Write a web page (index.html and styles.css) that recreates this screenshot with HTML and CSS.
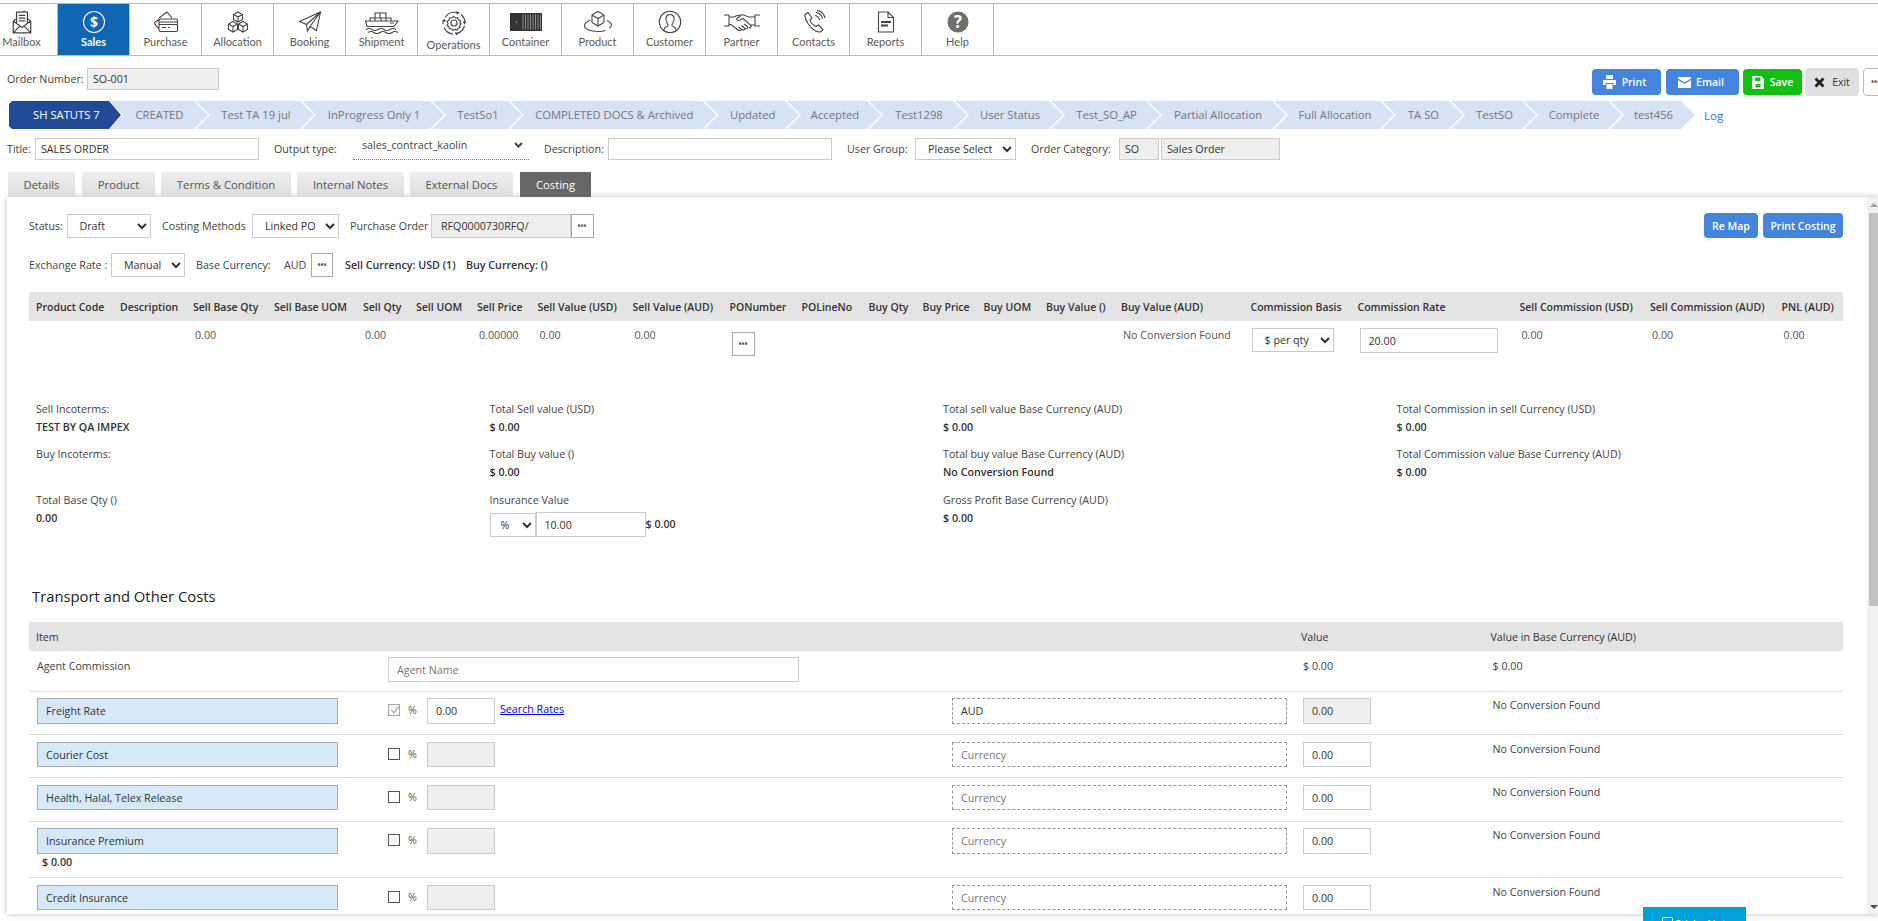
FILE: index.html
```html
<!DOCTYPE html>
<html lang="en">
<head>
<meta charset="utf-8">
<title>Sales Order</title>
<link rel="stylesheet" href="styles.css">
</head>
<body>
<div class="page">
  <nav class="nav">
    <a class="nav-item"><svg class="ico" width="24" height="24" viewBox="2.500 1 19 22"><path d="M4 11V22H20V11M4 11L7.500 8.500M20 11L16.500 8.500M4 11L12 17L20 11M4 22L10 15.800M20 22L14 15.800M7 13V3H13L14 2L15 3H17V13M9 6H15M9 8.500H15M9 11H15"/></svg><span>Mailbox</span></a>
    <a class="nav-item nav-active"><svg class="ico" width="24" height="24" viewBox="0 0 24 24"><circle cx="12" cy="12" r="10.500"/><text x="12" y="17" class="ico-text">$</text></svg><span>Sales</span></a>
    <a class="nav-item"><svg class="ico" width="26" height="24" viewBox="0 0 26 24"><path d="M6 8L14 2L19 8M6 19L2 14.500C1.500 14 1.500 13 2 12.500L6 9M7.500 9H23C24 9 24.500 9.500 24.500 10.500V20C24.500 21 24 21.500 23 21.500H7.500C6.500 21.500 6 21 6 20V10.500C6 9.500 6.500 9 7.500 9ZM6 12H24.500M6 14.500H24.500M9 17.500H13M15 17.500H17"/></svg><span>Purchase</span></a>
    <a class="nav-item"><svg class="ico" width="24" height="24" viewBox="0 0 24 24"><path d="M12 2L16.500 4.500V9.500L12 12L7.500 9.500V4.500ZM7.500 4.500L12 7L16.500 4.500M12 7V12M7 11.500L11.500 14V19.500L7 22L2.500 19.500V14ZM2.500 14L7 16.500L11.500 14M7 16.500V22M17 11.500L21.500 14V19.500L17 22L12.500 19.500V14ZM12.500 14L17 16.500L21.500 14M17 16.500V22"/></svg><span>Allocation</span></a>
    <a class="nav-item"><svg class="ico" width="24" height="24" viewBox="0 0 24 24"><path d="M1.500 11.500L22.500 2L18.500 20.500L12 16.500L9.500 21L8.500 14.500ZM22.500 2L8.500 14.500M22.500 2L12 16.500M9.500 21L12 16.500"/></svg><span>Booking</span></a>
    <a class="nav-item"><svg class="ico" width="36" height="24" viewBox="0 0 36 24"><path d="M3 16.500L1.500 11H6V8H11V3H16V3H22V8H27V11H34L30 16.500M6 11H27M11 8H22M16 3V8M11 8V11M17 8V11M22 8V11M3 16.500H30M2 19.500Q5 17.500 8 19.500T14 19.500T20 19.500T26 19.500T32 19.500M4 22.500Q7 20.500 10 22.500T16 22.500T22 22.500T28 22.500T34 22.500M26 13H30"/></svg><span>Shipment</span></a>
    <a class="nav-item nav-tall"><svg class="ico" width="26" height="26" viewBox="0 0 26 26"><circle cx="13" cy="13" r="3"/><path d="M13 6.500L14.500 8.200L16.700 7.700L17.300 9.800L19.400 10.500L18.800 12.700L20 13.800L18.600 15.500L19 17.500L16.900 18.100L16 20L13.800 19.400L12 20.300L10.500 18.700L8.300 18.800L7.800 16.700L6 15.500L7 13.500L6 11.500L8 10.200L8.300 8L10.500 8Z"/><path d="M4 7.500A11 11 0 0 1 16 2.500M20 4.500A11 11 0 0 1 24 13M23.500 16A11 11 0 0 1 16 23.500M12 24A11 11 0 0 1 3 17.500M2 14A11 11 0 0 1 2.500 10"/><path class="ico-fill" d="M15.500 1L19 3L15.500 4.500ZM25 11L23.800 15L21.800 11.800ZM15 25.500L14 22L18 23ZM1 11L4 8.500L4.500 12Z"/></svg><span>Operations</span></a>
    <a class="nav-item"><svg class="ico ico-box" width="32" height="20" viewBox="0 0 32 20"><rect class="ico-fill" x="0" y="1" width="32" height="18"/><path d="M13 2.500V17.500M15.500 2.500V17.500M18 2.500V17.500M20.500 2.500V17.500M23 2.500V17.500M25.500 2.500V17.500M28 2.500V17.500M30.500 2.500V17.500M6.500 9V11"/></svg><span>Container</span></a>
    <a class="nav-item"><svg class="ico" width="30" height="24" viewBox="0 0 30 24"><path d="M15 1.500L21 5V12.500L15 16L9 12.500V5ZM9 5L15 8.500L21 5M15 8.500V16M7.500 10C4 11.500 1.500 13.500 1.500 15.500C1.500 19 7 21.500 15 21.500C18 21.500 20.500 21.100 22.500 20.500M26.500 18C28 17 28.500 16 28.500 15C28.500 13.500 27 12 24 10.500"/></svg><span>Product</span></a>
    <a class="nav-item"><svg class="ico" width="24" height="24" viewBox="0 0 24 24"><circle cx="12" cy="12" r="10.700"/><path d="M6 20.500C6 18 7 17 9.500 16.200C10.500 15.800 10 14.500 9.300 13.500C8 11.500 7.500 9.500 8 7.500C8.500 5.500 10 4.500 12 4.500C14 4.500 15.500 5.500 16 7.500C16.500 9.500 16 11.500 14.700 13.500C14 14.500 13.500 15.800 14.500 16.200C17 17 18 18 18 20.500"/></svg><span>Customer</span></a>
    <a class="nav-item"><svg class="ico" width="38" height="20" viewBox="0 0 38 20"><path d="M1 3H6V14H1M37 3H32V14H37M6 5H11L14 3.500L19 3M32 5H26L19 2.500L14 6.500C13 8 15 9 17 8L20 6.500L28 13.500C29 15 27 16 26 15.500M6 12.500H8L15 18C16.500 19 18 18.500 18.500 17.500C20 18.500 21.500 18 22 16.500C23.500 17 25 16.500 25 15L21 12M18.500 17.500L15.500 15M22 16.500L18.500 13.500M28 13H32"/></svg><span>Partner</span></a>
    <a class="nav-item"><svg class="ico" width="24" height="24" viewBox="0 0 24 24"><path d="M3 4.500L6 2.500L10 8L8 10C8.500 12.500 11 15 14 16.500L16.500 15L21 19.500L18.500 22C14 22.500 9 18 6 13.500C3.500 10 2.500 7 3 4.500ZM13 5.500C15.500 6 17 7.500 17.500 10M14 2.500C17.500 3 20 5.500 20.500 9M15 0.500C19 1 22 4 23 8"/></svg><span>Contacts</span></a>
    <a class="nav-item"><svg class="ico" width="18" height="24" viewBox="0 0 18 24"><path d="M1.500 2H11L16.500 7.500V22H1.500ZM11 2V7.500H16.500"/><path class="ico-thick" d="M4 12H14M4 15.500H11"/></svg><span>Reports</span></a>
    <a class="nav-item"><svg class="ico ico-help" width="24" height="24" viewBox="0 0 24 24"><circle cx="12" cy="12" r="10.500"/><text x="12" y="18" class="ico-q">?</text></svg><span>Help</span></a>
  </nav>

  <div class="order-row">
    <div class="order-field"><label class="order-label">Order Number:</label><input class="inp inp-off order-input" readonly value="SO-001"></div>
    <div class="actions">
      <button class="btn btn-blue btn-print"><svg width="13" height="14" viewBox="0 0 13 14"><path d="M3 0H10V4H3ZM1 5H12C12.600 5 13 5.400 13 6V10H10.500V8H2.500V10H0V6C0 5.400 0.400 5 1 5ZM3.500 9H9.500V14H3.500Z" fill="#fff"/></svg>Print</button>
      <button class="btn btn-blue btn-email"><svg width="13" height="11" viewBox="0 0 13 11"><path d="M0 0H13V1.500L6.500 5.500L0 1.500ZM0 3L6.500 7L13 3V11H0Z" fill="#fff"/></svg>Email</button>
      <button class="btn btn-green btn-save"><svg width="12" height="13" viewBox="0 0 12 13"><path d="M1 0H9L12 3V12C12 12.600 11.600 13 11 13H1C0.400 13 0 12.600 0 12V1C0 0.400 0.400 0 1 0ZM3 1.500V5H8.500V1.500ZM3.500 8V11.500H8.500V8Z" fill="#fff" fill-rule="evenodd"/></svg>Save</button>
      <button class="btn btn-exit"><svg width="11" height="11" viewBox="0 0 11 11"><path d="M1.500 1.500L9.500 9.500M9.500 1.500L1.500 9.500" stroke="#222" stroke-width="2.800" fill="none"/></svg>Exit</button>
      <button class="btn btn-more"><span class="dots">•••</span></button>
    </div>
  </div>

  <div class="status-row">
    <ol class="steps">
      <li class="step step-on">SH SATUTS 7</li>
      <li class="step">CREATED</li>
      <li class="step">Test TA 19 jul</li>
      <li class="step">InProgress Only 1</li>
      <li class="step">TestSo1</li>
      <li class="step">COMPLETED DOCS &amp; Archived</li>
      <li class="step">Updated</li>
      <li class="step">Accepted</li>
      <li class="step">Test1298</li>
      <li class="step">User Status</li>
      <li class="step">Test_SO_AP</li>
      <li class="step">Partial Allocation</li>
      <li class="step">Full Allocation</li>
      <li class="step">TA SO</li>
      <li class="step">TestSO</li>
      <li class="step">Complete</li>
      <li class="step">test456</li>
    </ol>
    <a class="log">Log</a>
  </div>

  <div class="title-row">
    <label>Title:</label>
    <input class="inp" value="SALES ORDER">
    <label class="lbl-pad">Output type:</label>
    <div class="dotted-select"><span>sales_contract_kaolin</span><svg width="9" height="6" viewBox="0 0 9 6"><path d="M1 1L4.500 4.500L8 1" fill="none" stroke="#444" stroke-width="2"/></svg></div>
    <label class="lbl-pad">Description:</label>
    <input class="inp">
    <label class="lbl-pad">User Group:</label>
    <select class="sel"><option>Please Select</option></select>
    <label class="lbl-pad">Order Category:</label>
    <input class="inp inp-off" readonly value="SO">
    <input class="inp inp-off" readonly value="Sales Order">
  </div>

  <div class="tabs">
    <a class="tab tab-details">Details</a>
    <a class="tab tab-product">Product</a>
    <a class="tab tab-terms">Terms &amp; Condition</a>
    <a class="tab tab-notes">Internal Notes</a>
    <a class="tab tab-docs">External Docs</a>
    <a class="tab tab-costing">Costing</a>
  </div>

  <section class="panel">
    <div class="content">
      <div class="filter-one">
        <label>Status:</label>
        <select class="sel"><option>Draft</option></select>
        <label class="lbl-gap">Costing Methods</label>
        <select class="sel"><option>Linked PO</option></select>
        <label class="lbl-gap">Purchase Order</label>
        <input class="inp inp-off inp-po" readonly value="RFQ0000730RFQ/">
        <button class="dots-btn"><span class="dots">•••</span></button>
        <div class="panel-actions">
          <button class="btn btn-blue btn-remap">Re Map</button>
          <button class="btn btn-blue btn-costing">Print Costing</button>
        </div>
      </div>

      <div class="filter-two">
        <label class="lbl-rate">Exchange Rate :</label>
        <select class="sel sel-rate"><option>Manual</option></select>
        <label class="lbl-base">Base Currency:</label>
        <span class="aud">AUD</span>
        <button class="dots-btn dots-base"><span class="dots">•••</span></button>
        <strong class="cur-sell">Sell Currency: USD (1)</strong>
        <strong class="cur-buy">Buy Currency: ()</strong>
      </div>

      <div class="grid-table grid-head">
        <span>Product Code</span><span>Description</span><span>Sell Base Qty</span><span>Sell Base UOM</span><span>Sell Qty</span><span>Sell UOM</span><span>Sell Price</span><span>Sell Value (USD)</span><span>Sell Value (AUD)</span><span>PONumber</span><span>POLineNo</span><span>Buy Qty</span><span>Buy Price</span><span>Buy UOM</span><span>Buy Value ()</span><span>Buy Value (AUD)</span><span>Commission Basis</span><span>Commission Rate</span><span>Sell Commission (USD)</span><span>Sell Commission (AUD)</span><span>PNL (AUD)</span>
      </div>
      <div class="grid-table grid-row">
        <span></span><span></span><span class="num">0.00</span><span></span><span class="num">0.00</span><span></span><span class="num">0.00000</span><span class="num">0.00</span><span class="num">0.00</span>
        <span class="num"><button class="dots-btn dots-po"><span class="dots">•••</span></button></span><span></span><span></span><span></span><span></span><span></span>
        <span class="num">No Conversion Found</span>
        <span class="num"><select class="sel sel-basis"><option>$ per qty</option></select></span>
        <span class="num"><input class="inp inp-rate" value="20.00"></span>
        <span class="num">0.00</span><span class="num">0.00</span><span class="num">0.00</span>
      </div>

      <div class="summary">
        <div class="sum"><label>Sell Incoterms:</label><b>TEST BY QA IMPEX</b></div>
        <div class="sum"><label>Buy Incoterms:</label></div>
        <div class="sum"><label>Total Base Qty ()</label><b>0.00</b></div>
        <div class="sum"><label>Total Sell value (USD)</label><b>$ 0.00</b></div>
        <div class="sum"><label>Total Buy value ()</label><b>$ 0.00</b></div>
        <div class="sum"><label>Insurance Value</label>
          <div class="ins"><select class="sel sel-ins"><option>%</option></select><input class="inp inp-ins" value="10.00"><b>$ 0.00</b></div>
        </div>
        <div class="sum"><label>Total sell value Base Currency (AUD)</label><b>$ 0.00</b></div>
        <div class="sum"><label>Total buy value Base Currency (AUD)</label><b>No Conversion Found</b></div>
        <div class="sum"><label>Gross Profit Base Currency (AUD)</label><b>$ 0.00</b></div>
        <div class="sum"><label>Total Commission in sell Currency (USD)</label><b>$ 0.00</b></div>
        <div class="sum"><label>Total Commission value Base Currency (AUD)</label><b>$ 0.00</b></div>
      </div>

      <h2 class="heading">Transport and Other Costs</h2>

      <div class="cost cost-head">
        <span>Item</span><span></span><span></span><span>Value</span><span>Value in Base Currency (AUD)</span>
      </div>
      <div class="cost cost-agent">
        <span class="agent">Agent Commission</span>
        <span><input class="inp inp-agent" placeholder="Agent Name"></span>
        <span></span>
        <span class="agent agent-val">$ 0.00</span>
        <span class="agent agent-val">$ 0.00</span>
      </div>
      <div class="cost cost-a">
        <span><input class="inp inp-item" value="Freight Rate"></span>
        <span class="pct"><input type="checkbox" class="chk" checked disabled><em>%</em><input class="inp inp-pct" value="0.00"><a class="rates">Search Rates</a></span>
        <span><input class="inp inp-cur" value="AUD"></span>
        <span><input class="inp inp-off inp-val" readonly value="0.00"></span>
        <span class="noconv">No Conversion Found</span>
      </div>
      <div class="cost cost-b">
        <span><input class="inp inp-item" value="Courier Cost"></span>
        <span class="pct"><input type="checkbox" class="chk"><em>%</em><input class="inp inp-off inp-pct" readonly></span>
        <span><input class="inp inp-cur" placeholder="Currency"></span>
        <span><input class="inp inp-val" value="0.00"></span>
        <span class="noconv">No Conversion Found</span>
      </div>
      <div class="cost cost-c">
        <span><input class="inp inp-item" value="Health, Halal, Telex Release"></span>
        <span class="pct"><input type="checkbox" class="chk"><em>%</em><input class="inp inp-off inp-pct" readonly></span>
        <span><input class="inp inp-cur" placeholder="Currency"></span>
        <span><input class="inp inp-val" value="0.00"></span>
        <span class="noconv">No Conversion Found</span>
      </div>
      <div class="cost cost-d">
        <span><input class="inp inp-item" value="Insurance Premium"><b class="ins-amt">$ 0.00</b></span>
        <span class="pct"><input type="checkbox" class="chk"><em>%</em><input class="inp inp-off inp-pct" readonly></span>
        <span><input class="inp inp-cur" placeholder="Currency"></span>
        <span><input class="inp inp-val" value="0.00"></span>
        <span class="noconv">No Conversion Found</span>
      </div>
      <div class="cost cost-b">
        <span><input class="inp inp-item" value="Credit Insurance"></span>
        <span class="pct"><input type="checkbox" class="chk"><em>%</em><input class="inp inp-off inp-pct" readonly></span>
        <span><input class="inp inp-cur" placeholder="Currency"></span>
        <span><input class="inp inp-val" value="0.00"></span>
        <span class="noconv">No Conversion Found</span>
      </div>
    </div>
    <div class="scrollbar">
      <i class="arrow-up"></i>
      <div class="thumb"></div>
      <i class="arrow-down"></i>
    </div>
  </section>

  <a class="sticky"><svg width="11" height="11" viewBox="0 0 11 11"><rect x="0.500" y="0.500" width="10" height="10" rx="1" fill="none" stroke="#fff"/></svg>Sticky Notes</a>
</div>
</body>
</html>
```

FILE: styles.css
```css
* { box-sizing: border-box; }
html, body { margin: 0; padding: 0; background: #fff; }
body { font-family: "Open Sans", sans-serif; font-size: 10.700px; color: #444; }
.page { position: relative; width: 1878px; height: 921px; overflow: hidden; padding-top: 3px; }
label { color: #444; white-space: nowrap; }
button { font-family: inherit; cursor: pointer; }

/* top navigation */
.nav { display: flex; height: 53px; border-top: 1px solid #bbb; border-bottom: 1px solid #bbb; margin-left: -14px; }
.nav-item { width: 72px; flex: none; display: flex; flex-direction: column; align-items: center; border-right: 1px solid #bbb; font-family: Lato, sans-serif; font-size: 11px; color: #5a5a5a; }
.nav-item span { line-height: 14px; margin-top: 1px; }
.ico { margin-top: 6px; height: 24px; fill: none; stroke: #444; stroke-width: 1.100; flex: none; }
.ico .ico-fill { fill: #444; stroke: none; }
.ico .ico-thick { stroke-width: 2; }
.ico-box { height: 20px; margin-top: 8px; margin-bottom: 2px; }
.ico-box .ico-fill { fill: #333; }
.ico-box path { stroke: #8a8a8a; stroke-width: 1; }
.ico-text { font-family: "Open Sans", sans-serif; font-size: 14px; text-anchor: middle; fill: #fff; stroke: none; }
.ico-help circle { fill: #6e6e6e; stroke: none; }
.ico-q { font-family: "Open Sans", sans-serif; font-weight: 700; font-size: 17px; text-anchor: middle; fill: #fff; stroke: none; }
.nav-active { background: #1166b3; color: #fff; font-weight: 700; }
.nav-active .ico { stroke: #fff; }
.nav-tall .ico { height: 26px; margin-top: 6px; }
.nav-tall span { margin-top: 2px; }

/* order row */
.order-row { display: flex; justify-content: space-between; height: 28px; margin-top: 12px; padding-left: 7px; margin-right: -15px; }
.order-field { display: flex; align-items: center; height: 22px; }
.order-label { width: 80px; flex: none; }
.actions { display: flex; align-items: center; gap: 4px; }
.btn { display: flex; align-items: center; justify-content: center; gap: 6px; height: 26px; border: 0; border-radius: 4px; font-size: 10.500px; padding: 0; color: #fff; font-weight: 600; }
.btn-blue { background: #4484dc; }
.btn-green { background: #12c012; }
.btn-print { width: 69px; margin-right: 1px; padding-right: 4px; }
.btn-email { width: 73px; gap: 5px; padding-right: 3px; }
.btn-save { width: 59px; margin-right: -1px; }
.btn-exit { width: 54px; height: 28px; background: #e0e0e0; color: #333; font-weight: 400; gap: 7px; }
.btn-more { width: 30px; height: 28px; background: #fff; border: 1px solid #bbb; justify-content: flex-start; padding-left: 7px; }
.dots { color: #666; font-size: 8px; letter-spacing: 0; line-height: 1; font-weight: 700; }

/* status steps */
.status-row { display: flex; align-items: center; margin-top: 5px; padding-left: 9px; height: 28px; }
.steps { display: grid; grid-template-columns: 112px 87px 106px 130px 78px 194.500px 82.500px 82px 86px 96px 97px 126px 108px 69px 73px 86px 73px; list-style: none; margin: 0; padding: 0; height: 28px; }
.step { height: 28px; display: flex; align-items: center; justify-content: center; font-size: 11.250px; line-height: 28px; white-space: nowrap; background: #d7e2f5; color: #777; padding: 0 0 0 2px; margin-left: -12px; clip-path: polygon(0 0, calc(100% - 14px) 0, 100% 50%, calc(100% - 14px) 100%, 0 100%, 14px 50%); }
.step-on { margin-left: 0; background: #234a94; color: #fff; padding: 0 0 0 24px; justify-content: flex-start; clip-path: polygon(0 3px, 3px 0, calc(100% - 12px) 0, 100% 50%, calc(100% - 12px) 100%, 3px 100%, 0 calc(100% - 3px)); }
.log { color: #0a84ff; font-size: 11.500px; margin-left: 9px; }

/* title row */
.title-row { display: grid; grid-template-columns: 28px 224px 94px 176px 79px 224px 83px 101px 103px 40px 2px 119px; align-items: center; margin: 9px 0 0 7px; height: 22px; }
.title-row > input:last-child { grid-column: 12; }
.lbl-pad { padding-left: 15px; }
.inp { height: 22px; width: 100%; border: 1px solid #ccc; background: #fff; font: inherit; color: #333; padding: 0 5px; border-radius: 0; outline: 0; }
.inp-off { background: #efefef; }
.inp::placeholder { color: #777; }
.order-input { flex: none; width: 132px; }
.dotted-select { display: flex; justify-content: space-between; align-items: center; height: 22px; border-bottom: 1px dotted #777; padding: 0 6px 8px 9px; }
.sel { height: 22px; border: 1px solid #ccc; background: #fff; font: inherit; color: #333; padding: 0 0 0 8px; width: 100%; border-radius: 0; outline: 0; }

/* tabs */
.tabs { display: flex; margin: 12px 0 0 8px; height: 25px; }
.tab { display: flex; align-items: center; justify-content: center; background: linear-gradient(#efefef, #dcdcdc); color: #555; font-size: 11.300px; }
.tab-details { width: 67px; margin-right: 7px; }
.tab-product { width: 73px; margin-right: 6px; }
.tab-terms { width: 130px; margin-right: 6px; }
.tab-notes { width: 107px; margin-right: 6px; }
.tab-docs { width: 103px; margin-right: 7px; }
.tab-costing { width: 71px; background: #666; color: #fff; }

/* main panel */
.panel { display: flex; height: 717px; margin-left: 7px; background: #fff; box-shadow: 0 0 6px rgba(0, 0, 0, 0.250); }
.content { width: 1860px; overflow: hidden; padding: 16px 0 0 22px; }
.scrollbar { width: 11px; background: #f1f1f1; display: flex; flex-direction: column; align-items: center; position: relative; }
.thumb { position: absolute; top: 16px; left: 2px; right: 0; height: 393px; background: #c1c1c1; }
.arrow-up { position: absolute; top: 6px; left: 3px; border: 4px solid transparent; border-top: 0; border-bottom: 4px solid #a3a3a3; }
.arrow-down { position: absolute; bottom: 5px; left: 3px; border: 4px solid transparent; border-bottom: 0; border-top: 4px solid #505050; }

.filter-one { display: grid; grid-template-columns: 37.500px 84.500px 101px 87px 92px 139.500px 23.500px 1fr; align-items: center; height: 24px; width: 1814px; }
.filter-one .sel, .filter-one .inp, .filter-one .dots-btn { height: 24px; }
.inp-po { padding-left: 9px; }
.lbl-gap { padding-left: 11px; }
.panel-actions { display: flex; justify-content: flex-end; gap: 5px; }
.btn-remap { width: 54px; height: 25px; }
.btn-costing { width: 80px; height: 25px; }
.dots-btn { display: flex; align-items: center; justify-content: center; height: 24px; width: 23px; background: #fff; border: 1px solid #aaa; padding: 0; }

.filter-two { display: flex; align-items: center; height: 24px; margin-top: 16px; }
.lbl-rate { width: 82px; }
.sel-rate { width: 73.500px; height: 24px; }
.lbl-base { margin-left: 11.500px; width: 88px; }
.aud { width: 27px; }
.dots-base { width: 22px; }
.cur-sell { margin-left: 12px; width: 121px; color: #333; font-weight: 600; }
.cur-buy { color: #333; font-weight: 600; }

.grid-table { display: grid; width: 1814px; grid-template-columns: 84px 73px 81px 89px 53px 61px 60.500px 95px 97px 72px 67px 54px 61px 62.500px 75px 129.500px 107px 162px 130.500px 131.500px 1fr; }
.grid-head { margin-top: 15px; height: 29px; background: #e4e4e4; align-items: center; color: #333; font-weight: 600; font-size: 10.500px; }
.grid-head span { padding-left: 7px; white-space: nowrap; }
.grid-row { height: 79px; }
.grid-row span { padding-left: 9px; white-space: nowrap; }
.grid-row .dots { padding: 0; }
.num { padding-top: 7px; line-height: 15px; color: #555; }
.dots-po { margin-top: 4px; }
.sel-basis { width: 82px; height: 24px; margin-left: -1px; }
.inp-rate { width: 138px; height: 25px; padding-left: 8px; }

.summary { display: grid; grid-auto-flow: column; grid-template-rows: 45px 46px 45px; grid-template-columns: repeat(4, 453.500px); padding-left: 7px; }
.sum { display: flex; flex-direction: column; line-height: 18px; }
.sum label { height: 18px; }
.sum b { color: #333; font-weight: 600; line-height: 19px; }
.ins { display: flex; align-items: center; margin-top: 3px; }
.sel-ins { width: 46px; height: 24px; padding-left: 6px; }
.inp-ins { width: 110px; height: 25px; padding-left: 8px; }

.heading { margin: 49px 0 0 3px; height: 22px; font-size: 14.800px; line-height: 22px; font-weight: 500; color: #222; }

.cost { display: grid; width: 1814px; grid-template-columns: 359px 564px 349px 189.500px 1fr; border-bottom: 1px solid #dfdfe6; padding-top: 7px; height: 43px; }
.cost-head { margin-top: 15px; height: 29px; padding: 0; background: #e4e4e4; align-items: center; border: 0; color: #333; }
.cost-head span:first-child { padding-left: 7px; }
.cost-agent { height: 41px; padding-top: 6px; }
.agent { padding: 1px 0 0 8px; line-height: 16px; color: #444; }
.agent-val { padding-left: 2px; }
.inp-agent { width: 411px; height: 25px; padding-left: 8px; }
.cost-a { padding-top: 6px; }
.cost-a .inp { height: 26px; }
.cost-c { height: 44px; }
.cost-d { height: 56px; padding-top: 6px; }
.cost-d .inp { height: 26px; }
.inp-item { display: block; width: 301px; height: 25px; margin-left: 8px; background: #d6e9f9; border-color: #aaa; padding-left: 8px; }
.ins-amt { display: block; margin: 0 0 0 13px; line-height: 16px; color: #333; font-weight: 600; }
.pct { display: flex; align-items: flex-start; }
.chk { width: 12px; height: 12px; margin: 6px 0 0 0; flex: none; appearance: none; border: 1px solid #555; background: #fff; border-radius: 0; position: relative; }
.chk:disabled { border-color: #aaa; background: #f4f4f4; }
.chk:checked::after { content: ""; position: absolute; left: 3.500px; top: 0; width: 3px; height: 7px; border: solid #999; border-width: 0 1.500px 1.500px 0; transform: rotate(40deg); }
.pct em { font-style: normal; flex: none; width: 27px; padding-left: 8px; line-height: 16px; margin-top: 4px; color: #555; }
.inp-pct { width: 68px; height: 25px; padding-left: 8px; flex: none; }
.rates { color: #0000ee; text-decoration: underline; margin: 3px 0 0 5px; line-height: 16px; }
.inp-cur { display: block; width: 335px; height: 25px; border: 1px dashed #999; padding-left: 8px; }
.inp-val { display: block; width: 68px; height: 25px; margin-left: 2px; padding-left: 8px; }
.noconv { padding: 0 0 0 2px; line-height: 15px; color: #444; }

.sticky { position: absolute; left: 1643px; top: 907px; width: 103px; height: 24px; background: #00a0dc; color: #fff; display: flex; align-items: flex-start; gap: 2px; padding: 10px 0 0 19px; line-height: 14px; font-size: 11px; }
```
